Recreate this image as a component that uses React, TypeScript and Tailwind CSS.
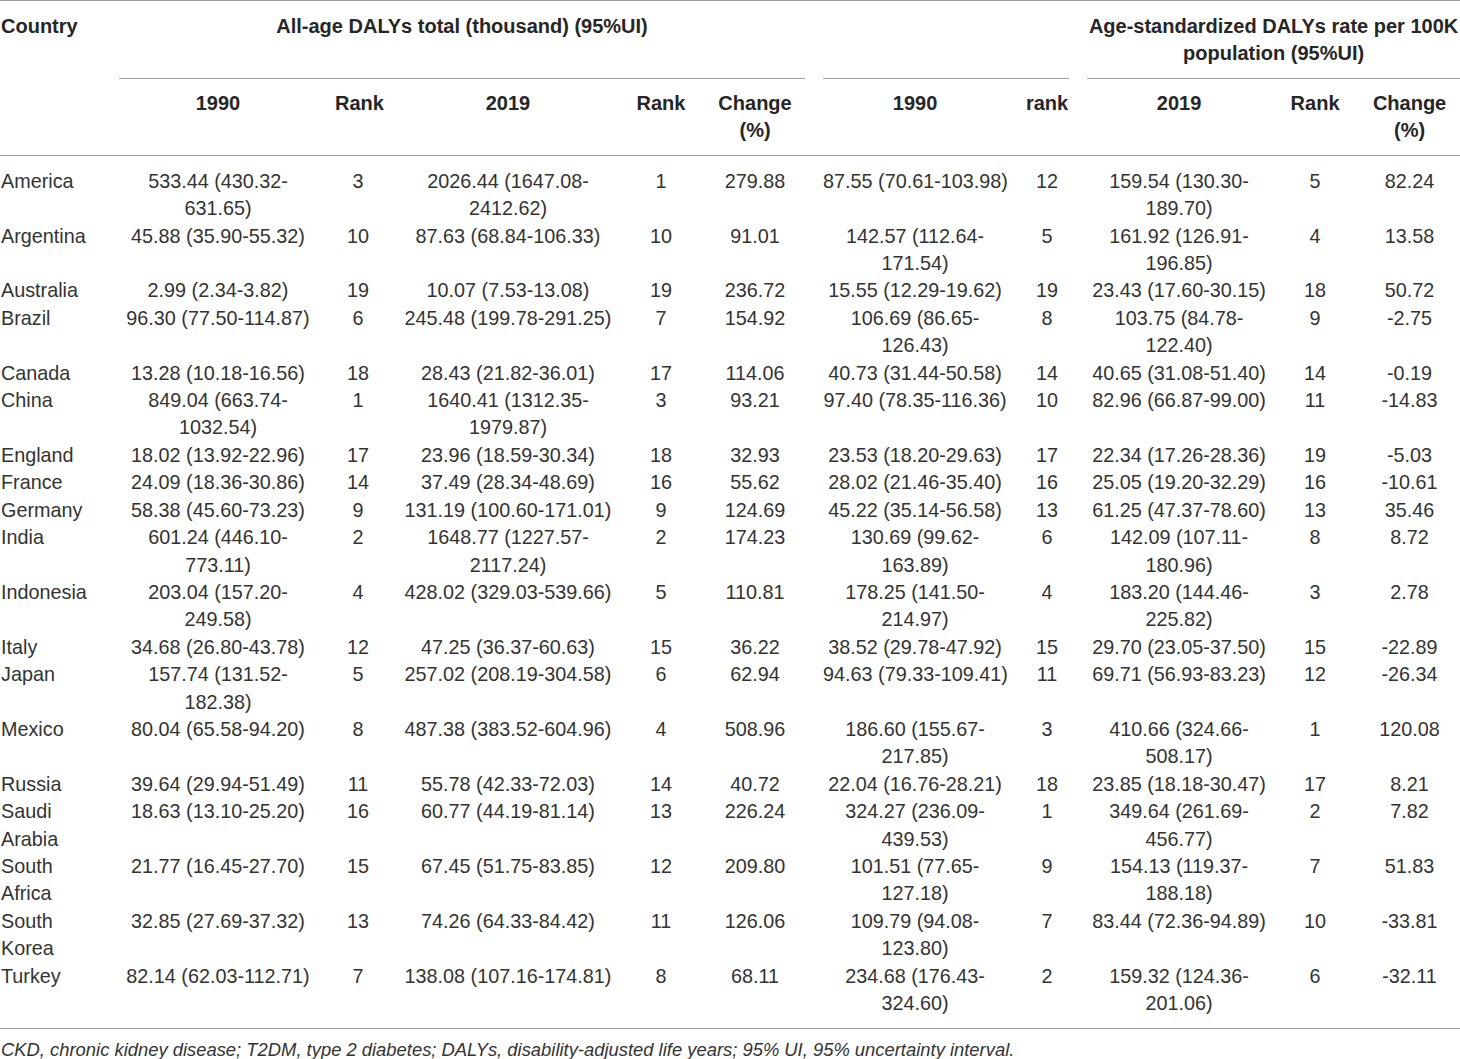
const rows: string[][] = [
  ["America", "533.44 (430.32-|631.65)", "3", "2026.44 (1647.08-|2412.62)", "1", "279.88", "87.55 (70.61-103.98)", "12", "159.54 (130.30-|189.70)", "5", "82.24"],
  ["Argentina", "45.88 (35.90-55.32)", "10", "87.63 (68.84-106.33)", "10", "91.01", "142.57 (112.64-|171.54)", "5", "161.92 (126.91-|196.85)", "4", "13.58"],
  ["Australia", "2.99 (2.34-3.82)", "19", "10.07 (7.53-13.08)", "19", "236.72", "15.55 (12.29-19.62)", "19", "23.43 (17.60-30.15)", "18", "50.72"],
  ["Brazil", "96.30 (77.50-114.87)", "6", "245.48 (199.78-291.25)", "7", "154.92", "106.69 (86.65-|126.43)", "8", "103.75 (84.78-|122.40)", "9", "-2.75"],
  ["Canada", "13.28 (10.18-16.56)", "18", "28.43 (21.82-36.01)", "17", "114.06", "40.73 (31.44-50.58)", "14", "40.65 (31.08-51.40)", "14", "-0.19"],
  ["China", "849.04 (663.74-|1032.54)", "1", "1640.41 (1312.35-|1979.87)", "3", "93.21", "97.40 (78.35-116.36)", "10", "82.96 (66.87-99.00)", "11", "-14.83"],
  ["England", "18.02 (13.92-22.96)", "17", "23.96 (18.59-30.34)", "18", "32.93", "23.53 (18.20-29.63)", "17", "22.34 (17.26-28.36)", "19", "-5.03"],
  ["France", "24.09 (18.36-30.86)", "14", "37.49 (28.34-48.69)", "16", "55.62", "28.02 (21.46-35.40)", "16", "25.05 (19.20-32.29)", "16", "-10.61"],
  ["Germany", "58.38 (45.60-73.23)", "9", "131.19 (100.60-171.01)", "9", "124.69", "45.22 (35.14-56.58)", "13", "61.25 (47.37-78.60)", "13", "35.46"],
  ["India", "601.24 (446.10-|773.11)", "2", "1648.77 (1227.57-|2117.24)", "2", "174.23", "130.69 (99.62-|163.89)", "6", "142.09 (107.11-|180.96)", "8", "8.72"],
  ["Indonesia", "203.04 (157.20-|249.58)", "4", "428.02 (329.03-539.66)", "5", "110.81", "178.25 (141.50-|214.97)", "4", "183.20 (144.46-|225.82)", "3", "2.78"],
  ["Italy", "34.68 (26.80-43.78)", "12", "47.25 (36.37-60.63)", "15", "36.22", "38.52 (29.78-47.92)", "15", "29.70 (23.05-37.50)", "15", "-22.89"],
  ["Japan", "157.74 (131.52-|182.38)", "5", "257.02 (208.19-304.58)", "6", "62.94", "94.63 (79.33-109.41)", "11", "69.71 (56.93-83.23)", "12", "-26.34"],
  ["Mexico", "80.04 (65.58-94.20)", "8", "487.38 (383.52-604.96)", "4", "508.96", "186.60 (155.67-|217.85)", "3", "410.66 (324.66-|508.17)", "1", "120.08"],
  ["Russia", "39.64 (29.94-51.49)", "11", "55.78 (42.33-72.03)", "14", "40.72", "22.04 (16.76-28.21)", "18", "23.85 (18.18-30.47)", "17", "8.21"],
  ["Saudi|Arabia", "18.63 (13.10-25.20)", "16", "60.77 (44.19-81.14)", "13", "226.24", "324.27 (236.09-|439.53)", "1", "349.64 (261.69-|456.77)", "2", "7.82"],
  ["South|Africa", "21.77 (16.45-27.70)", "15", "67.45 (51.75-83.85)", "12", "209.80", "101.51 (77.65-|127.18)", "9", "154.13 (119.37-|188.18)", "7", "51.83"],
  ["South|Korea", "32.85 (27.69-37.32)", "13", "74.26 (64.33-84.42)", "11", "126.06", "109.79 (94.08-|123.80)", "7", "83.44 (72.36-94.89)", "10", "-33.81"],
  ["Turkey", "82.14 (62.03-112.71)", "7", "138.08 (107.16-174.81)", "8", "68.11", "234.68 (176.43-|324.60)", "2", "159.32 (124.36-|201.06)", "6", "-32.11"],
];

const subHeads = ["1990", "Rank", "2019", "Rank", "Change|(%)", "1990", "rank", "2019", "Rank", "Change|(%)"];

function Lines({ text }: { text: string }) {
  return (
    <>
      {text.split("|").map((l, i) => (
        <div key={i}>{l}</div>
      ))}
    </>
  );
}

export default function App() {
  return (
    <div className="w-[1460px] overflow-hidden bg-white text-[#333] font-['Liberation_Sans',Arial,sans-serif]">
      <table className="w-[1469px] table-fixed border-collapse border-t border-[#9d9d9d]">
        <colgroup>
          <col className="w-[110px]" />
          <col className="w-[216px]" />
          <col className="w-[64px]" />
          <col className="w-[236px]" />
          <col className="w-[70px]" />
          <col className="w-[118px]" />
          <col className="w-[202px]" />
          <col className="w-[62px]" />
          <col className="w-[202px]" />
          <col className="w-[70px]" />
          <col className="w-[119px]" />
        </colgroup>
        <thead className="text-[20px] leading-[27.4px] font-bold text-[#262626]">
          <tr>
            <th rowSpan={2} className="p-0 pl-[1px] pt-[12px] align-top text-left border-b border-[#9d9d9d]">
              Country
            </th>
            <th colSpan={5} className="p-0 align-top">
              <div className="mx-[9px] h-[78px] pt-[12px] border-b border-[#9d9d9d] text-center whitespace-nowrap">
                All-age DALYs total (thousand) (95%UI)
              </div>
            </th>
            <th colSpan={2} className="p-0 align-top">
              <div className="mx-[9px] h-[78px] border-b border-[#9d9d9d]" />
            </th>
            <th colSpan={3} className="p-0 align-top">
              <div className="mx-[9px] h-[78px] pt-[12px] border-b border-[#9d9d9d] text-center whitespace-nowrap">
                Age-standardized DALYs rate per 100K
                <br />
                population (95%UI)
              </div>
            </th>
          </tr>
          <tr>
            {subHeads.map((h, i) => (
              <th key={i} className="px-[9px] pt-[11px] pb-[10px] align-top text-center whitespace-nowrap border-b border-[#9d9d9d]">
                <Lines text={h} />
              </th>
            ))}
          </tr>
        </thead>
        <tbody className="text-[19.8px] leading-[27.4px]">
          {rows.map((row, r) => (
            <tr key={r} className={r === rows.length - 1 ? "border-b border-[#9d9d9d]" : ""}>
              {row.map((cell, c) => (
                <td
                  key={c}
                  className={
                    (c === 0 ? "pl-[1px] pr-[9px] text-left " : "px-[9px] text-center ") +
                    (r === 0 ? "pt-[12px] " : "pt-0 ") +
                    (r === rows.length - 1 ? "pb-[11px] " : "pb-0 ") +
                    "align-top whitespace-nowrap"
                  }
                >
                  <Lines text={cell} />
                </td>
              ))}
            </tr>
          ))}
        </tbody>
      </table>
      <p className="pl-[1px] pt-[9px] text-[18.4px] leading-[24px] italic">
        CKD, chronic kidney disease; T2DM, type 2 diabetes; DALYs, disability-adjusted life years; 95% UI, 95% uncertainty interval.
      </p>
    </div>
  );
}
